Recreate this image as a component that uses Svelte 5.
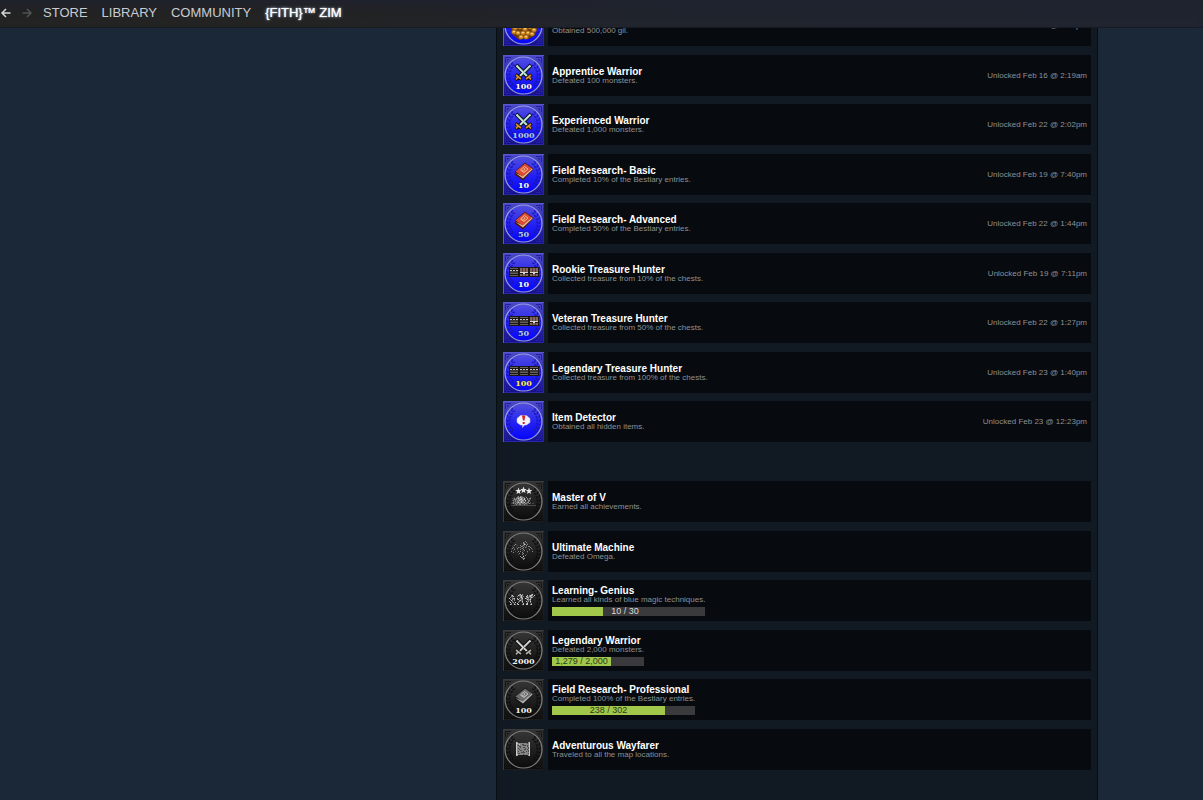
<script>
  const nav = ['STORE', 'LIBRARY', 'COMMUNITY'];

  const unlocked = [
    { icon: 'gil', title: '', text: 'Obtained 500,000 gil.', date: 'Unlocked Feb 22 @ 2:02pm' },
    { icon: 'swords', num: '100', tone: '#ffffff', title: 'Apprentice Warrior', text: 'Defeated 100 monsters.', date: 'Unlocked Feb 16 @ 2:19am' },
    { icon: 'swords', num: '1000', tone: '#b4cdf5', title: 'Experienced Warrior', text: 'Defeated 1,000 monsters.', date: 'Unlocked Feb 22 @ 2:02pm' },
    { icon: 'book', num: '10', tone: '#ffffff', title: 'Field Research- Basic', text: 'Completed 10% of the Bestiary entries.', date: 'Unlocked Feb 19 @ 7:40pm' },
    { icon: 'book', num: '50', tone: '#b4cdf5', title: 'Field Research- Advanced', text: 'Completed 50% of the Bestiary entries.', date: 'Unlocked Feb 22 @ 1:44pm' },
    { icon: 'chests', open: 1, num: '10', tone: '#ffffff', title: 'Rookie Treasure Hunter', text: 'Collected treasure from 10% of the chests.', date: 'Unlocked Feb 19 @ 7:11pm' },
    { icon: 'chests', open: 2, num: '50', tone: '#b4cdf5', title: 'Veteran Treasure Hunter', text: 'Collected treasure from 50% of the chests.', date: 'Unlocked Feb 22 @ 1:27pm' },
    { icon: 'chests', open: 3, num: '100', tone: '#ffee58', title: 'Legendary Treasure Hunter', text: 'Collected treasure from 100% of the chests.', date: 'Unlocked Feb 23 @ 1:40pm' },
    { icon: 'bubble', title: 'Item Detector', text: 'Obtained all hidden items.', date: 'Unlocked Feb 23 @ 12:23pm' }
  ];

  const locked = [
    { icon: 'stars', title: 'Master of V', text: 'Earned all achievements.' },
    { icon: 'omega', title: 'Ultimate Machine', text: 'Defeated Omega.' },
    { icon: 'party', title: 'Learning- Genius', text: 'Learned all kinds of blue magic techniques.', bar: { now: 10, max: 30, label: '10 / 30' } },
    { icon: 'swords', num: '2000', tone: '#f4f4f4', title: 'Legendary Warrior', text: 'Defeated 2,000 monsters.', bar: { now: 1279, max: 2000, label: '1,279 / 2,000' } },
    { icon: 'book', num: '100', tone: '#f4f4f4', title: 'Field Research- Professional', text: 'Completed 100% of the Bestiary entries.', bar: { now: 238, max: 302, label: '238 / 302' } },
    { icon: 'map', title: 'Adventurous Wayfarer', text: 'Traveled to all the map locations.' }
  ];

  // Pixel sprites: one character per pixel, "." is transparent.
  const sprites = {
    party: {
      x: 6, y: 14, rows: [
        '..........gw.g........gw.....',
        '..gw.....wggwg....w.gwwg.w...',
        '..ggw...g.dgwdg..wgdgwgdg....',
        '.g.d.......gwg...gwgdgwg.....',
        'w..ggw..w.gdgw..wgdg.gd......',
        '.g.gdg..gw.dgg...dwggw.......',
        '..wd.g....gwdg....dgdg.......',
        'g..g.....dg.dw...wdg.w.......',
        '.w.dg.w..g...g....g..g.......',
        '..g..g..w.....w..gw...g......',
        '.wg..wg.gw...gw..ww..gw......'
      ]
    },
    omega: {
      x: 8, y: 10, rows: [
        '..............g...........',
        '............gd.g..........',
        '..........d.gg..d.........',
        '....gd......dwg.g.........',
        '...g..d..g.dgd.g..........',
        '.d........gg.d.d.gg.......',
        '..g..d.gdg..g.gd...g......',
        '.g.d..g...dgd....d..g.....',
        'd..g..d..g..g..d..g..d....',
        '..d........d.g....d.......',
        'g...d..g.g..d...g....g....',
        '..g...d....g....d.........',
        '........g..dg.............',
        '.......d...g...d..........',
        '............d.g...........',
        '.........g..w.............',
        '..........gg.d............',
        '...........dgg............',
        '............g.............'
      ]
    },
    castle: {
      x: 8, y: 15, rows: [
        '......dg.ggd..d..........',
        '...d.dgggwgggd.g...d.....',
        '.ddgdggwggwgdwd.g.gg.....',
        '..dgggdggwwggwd.gddd.....',
        '.dgdgdggwggwgdwd.gg......',
        '..ddgdggdgwggdg.dgd......',
        '.dgddggwggwggwddgg.d.....',
        'ddgdgdgdggdggdggddgd.dd..',
        '...ddgddggdddgddd........',
        'ddddddddddddddddddddddddd'
      ]
    },
    map: {
      x: 13, y: 13, rows: [
        'wg..........gw',
        'wwgggggggggdgw',
        'wggwggddgggggw',
        'wgdggggdddgdgw',
        'wggddggggggdgw',
        'wgggdggddgggdw',
        'wgdggggggdggdw',
        'wggdggggddgdgw',
        'wgggddggggggdw',
        'wgdggggdggdgdw',
        'wggggddddggggw',
        'wgddggggggggdw',
        'wwgggggdgggggw',
        'wg..........gw'
      ]
    }
  };

  const tones = { w: '#c8c8c8', g: '#858585', d: '#4a4a4a' };

  const pixels = (s) =>
    s.rows.flatMap((row, j) =>
      [...row].flatMap((c, i) => (tones[c] ? [{ x: s.x + i, y: s.y + j, fill: tones[c] }] : []))
    );

  // Laurel leaves, spread along both sides of the medal.
  const leaves = [-46, -32, -18, -4, 10, 24, 38].flatMap((a) =>
    [1, -1].flatMap((side) =>
      [14, 16.5].map((radius, k) => {
        const r = (a * Math.PI) / 180;
        return {
          x: 20.5 + side * radius * Math.cos(r),
          y: 20.5 + radius * Math.sin(r),
          turn: side * (a + (k ? 30 : -30))
        };
      })
    )
  );
</script>

{#snippet dots(sprite)}
  {#each pixels(sprite) as p}
    <rect x={p.x} y={p.y} width="1" height="1" fill={p.fill} shape-rendering="crispEdges" />
  {/each}
{/snippet}

{#snippet medal(item, on)}
  <svg class="medal" viewBox="0 0 41 41" aria-hidden="true">
    <rect width="41" height="41" fill={on ? 'url(#plateOn)' : 'url(#plateOff)'} />
    <path d="M.5 41V.5H41" fill="none" stroke={on ? '#5856d0' : '#3a3a3a'} />
    <path d="M40.500 1v39.500H1" fill="none" stroke={on ? '#2b27a4' : '#1c1c1c'} />
    <g fill="none" stroke={on ? '#27209e' : '#161616'}>
      <path d="M2.5 8V2.5H8M4.5 6V4.5H6M33 2.5h5.500V8M35 4.500h1.500V6M2.500 33v5.500H8M4.500 35v1.500H6M33 38.500h5.500V33M35 36.500h1.500V35" />
    </g>
    <circle cx="20.5" cy="20.5" r="18.5" fill={on ? 'url(#discOn)' : 'url(#discOff)'} stroke={on ? '#9a9fdc' : '#808080'} stroke-width="1.2" />
    {#each leaves as l}
      <ellipse cx={l.x} cy={l.y} rx="0.7" ry="1.6" fill={on ? '#1815b4' : '#0c0c0c'} transform="rotate({l.turn} {l.x} {l.y})" />
    {/each}

    {#if item.icon === 'swords'}
      <g fill="none">
        <path d="M28 10L15 23M13 10l13 13" stroke="#0a0a0a" stroke-width="4" />
        <path d="M27.500 10.500L17 21M13.500 10.500L24 21" stroke={on ? '#cfe4e0' : '#d4d4d4'} stroke-width="2.200" />
        <path d="M27 12L18 21M15 11l9 9" stroke={on ? '#69b3a8' : '#777'} stroke-width="0.800" />
        <path d="M12.500 19.500l6 5M28.500 19.500l-6 5M16 21l-3.500 4M25 21l3.500 4" stroke="#100a04" stroke-width="3.400" />
        <path d="M13 20l5 4M28 20l-5 4M15.500 21.500l-2.500 3M25.500 21.500l2.500 3" stroke={on ? '#d9902a' : '#aaa'} stroke-width="1.700" />
      </g>
    {:else if item.icon === 'book'}
      <path d="M22 8.500L30.500 15 20 26.500 11.500 20.500 12.500 17z" fill={on ? '#4a1612' : '#161616'} />
      <path d="M12.500 19L20 24.500 29.500 15.500 29 14 19.500 22z" fill={on ? '#dcb98c' : '#b4b4b4'} />
      <path d="M22 9.500L29 14.500 19.500 22.500 12.500 17.500z" fill={on ? '#dd4a35' : '#6c6c6c'} />
      <path d="M17.500 16l4-3.500 3.500 2.500-4 3.500zM19 16l2.500 1.500M21 14l1 2.500" fill="none" stroke={on ? '#f0b988' : '#c0c0c0'} />
    {:else if item.icon === 'chests'}
      {#each [0, 1, 2] as n}
        <g transform="translate({6 + n * 10} 14)" shape-rendering="crispEdges">
          <rect width="10" height="10" fill="#1c1716" />
          {#if n < item.open}
            <path d="M1 1h8v1H1zM1 6h8v1H1zM1 8h8v1H1z" fill="#65605c" />
            <path d="M1 3h2v1H1zM4 3h2v1H4zM7 3h2v1H7z" fill="#c8c8c2" />
            <path d="M1 4h8v2H1z" fill="#3d3937" />
          {:else}
            <path d="M1 1h8v4H1zM1 7h8v2H1z" fill="#84665c" />
            <path d="M3 1h1v4H3zM6 1h1v4H6zM3 7h1v2H3zM6 7h1v2H6z" fill="#54403a" />
            <path d="M1 5h8v1H1zM4 6h2v1H4z" fill="#d8d4d0" />
          {/if}
        </g>
      {/each}
    {:else if item.icon === 'bubble'}
      <path d="M17.500 14.500h6l3.500 3v4l-3.500 2.500h-2l-2 2.500v-2.500h-2L14 21.500v-4z" fill="#f6f4fb" stroke="#c9c8ee" stroke-width="0.500" />
      <path d="M19 14.500h3.400l-.9 5h-1.600zM19.700 21h2v2h-2z" fill="#e0202c" />
    {:else if item.icon === 'gil'}
      <path d="M8 21l5-5 9-3 8 5 4 5-2 7-6 4-6-1-4 2-6-5z" fill="#6b3c08" />
      {#each [[12, 23], [17, 22], [22, 24], [27, 22], [31, 25], [11, 27], [15, 28], [20, 28], [25, 28], [29, 29], [18, 32], [23, 32]] as [x, y]}
        <ellipse cx={x} cy={y} rx="2.600" ry="2.200" fill="#d8942c" stroke="#7a4810" stroke-width="0.600" />
        <rect x={x - 1} y={y - 1} width="2" height="1" fill="#f4cf74" />
      {/each}
    {:else if item.icon === 'stars'}
      {#each [[15.5, 10], [20.5, 9], [26, 10]] as [x, y]}
        <path transform="translate({x} {y})" d="M0-3.400L.9-1h2.400L1.400.600 2 3 0 1.700-2 3-1.400.600-3.300-1H-.9z" fill="#e9e9e9" />
      {/each}
      {@render dots(sprites.castle)}
    {:else}
      {@render dots(sprites[item.icon])}
    {/if}

    {#if item.num}
      <text class="num" x="20.500" y="34" text-anchor="middle" fill={item.tone} stroke={on ? '#14149a' : '#0c0c0c'}>{item.num}</text>
    {/if}
  </svg>
{/snippet}

{#snippet entry(item, on)}
  <li>
    {@render medal(item, on)}
    <div class="card">
      <div class="info">
        {#if item.title}<h3>{item.title}</h3>{:else}<div class="blank"></div>{/if}
        <p>{item.text}</p>
        {#if item.bar}
          {@const share = item.bar.now / item.bar.max}
          <div class="bar" role="progressbar" aria-valuenow={item.bar.now} aria-valuemin="0" aria-valuemax={item.bar.max} aria-label={item.title}>
            <div class="fill" style="width: {share * 100}%">
              {#if share >= 0.5}{item.bar.label}{/if}
            </div>
            {#if share < 0.5}<span class="rest">{item.bar.label}</span>{/if}
          </div>
        {/if}
      </div>
      {#if item.date}<time>{item.date}</time>{/if}
    </div>
  </li>
{/snippet}

<svg class="defs" width="0" height="0" aria-hidden="true">
  <defs>
    <linearGradient id="plateOn" x2="0" y2="1"><stop stop-color="#4b49c8" /><stop offset="1" stop-color="#140f8c" /></linearGradient>
    <linearGradient id="discOn" x2="0" y2="1"><stop stop-color="#5350dc" /><stop offset="0.550" stop-color="#2220f4" /><stop offset="1" stop-color="#0504fb" /></linearGradient>
    <linearGradient id="plateOff" x2="0" y2="1"><stop stop-color="#343434" /><stop offset="1" stop-color="#0c0c0c" /></linearGradient>
    <linearGradient id="discOff" x2="0" y2="1"><stop stop-color="#363636" /><stop offset="1" stop-color="#0b0b0b" /></linearGradient>
  </defs>
</svg>

<header>
  <button aria-label="Back">
    <svg viewBox="0 0 10 10"><path d="M9.500 5H1.200M5 1L1 5l4 4" /></svg>
  </button>
  <button aria-label="Forward" disabled>
    <svg viewBox="0 0 10 10"><path d="M.5 5h8.300M5 1l4 4-4 4" /></svg>
  </button>
  <nav>
    {#each nav as label}<a href="#top">{label}</a>{/each}
    <a class="current" href="#top" aria-current="page">{'{FITH}™ ZIM'}</a>
  </nav>
</header>

<div class="page">
  <main>
    <ul>{#each unlocked as item}{@render entry(item, true)}{/each}</ul>
    <ul>{#each locked as item}{@render entry(item, false)}{/each}</ul>
  </main>
</div>

<style>
  :global(body) {
    background: #1b2838;
    font-family: 'Liberation Sans', Arial, sans-serif;
    overflow: hidden;
  }
  .defs { position: absolute; }
  header {
    position: fixed;
    inset: 0 0 auto;
    z-index: 1;
    display: flex;
    align-items: center;
    box-sizing: border-box;
    height: 28px;
    border-bottom: 1px solid #171b21;
    background: linear-gradient(90deg, #232323 0, #232323 25%, #20242d 55%, #1f2430);
    box-shadow: inset 0 12px 12px -8px #1f2330;
    padding-bottom: 1px;
  }
  button {
    width: 12px;
    height: 12px;
    padding: 0;
    border: 0;
    background: none;
    color: #d3d5d8;
    display: flex;
    align-items: center;
    margin-right: 9px;
  }
  button:disabled { color: #505254; }
  button svg {
    width: 12px;
    height: 10px;
    fill: none;
    stroke: currentColor;
    stroke-width: 1.500;
  }
  nav {
    display: flex;
    gap: 14px;
    padding-left: 1px;
  }
  a {
    color: #c8ccd2;
    font-size: 13px;
    line-height: 16px;
    text-decoration: none;
  }
  .current {
    color: #ffffff;
    text-shadow: 0 0 3px #b9cbe4, 0 0 1px #ffffff;
  }
  .page {
    display: grid;
    grid-template-columns: 496fr 602fr 105fr;
    min-height: 100vh;
  }
  main {
    grid-column: 2;
    min-width: 0;
    box-sizing: border-box;
    padding: 5px 6px 24px;
    border: solid #080d12;
    border-width: 0 1px;
    background: #111a23;
  }
  ul {
    list-style: none;
    margin: 0;
    padding: 0;
  }
  ul + ul { margin-top: 39px; }
  li {
    display: flex;
    gap: 4px;
    margin-bottom: 9px;
  }
  li:nth-child(even) { margin-bottom: 8px; }
  li:last-child { margin-bottom: 0; }
  .medal {
    flex: none;
    width: 41px;
    height: 41px;
  }
  .num {
    font: bold 8px 'DejaVu Serif', serif;
    stroke-width: 1px;
    paint-order: stroke;
  }
  .card {
    flex: 1;
    display: flex;
    align-items: center;
    justify-content: space-between;
    min-width: 0;
    padding: 0 4px;
    background: #070a0f;
  }
  .info { width: fit-content; }
  h3, p { margin: 0; }
  h3, .blank {
    height: 10px;
    color: #ffffff;
    font-size: 10px;
    line-height: 12px;
  }
  p, time {
    color: #8d9194;
    font-size: 8px;
    line-height: 10px;
    white-space: nowrap;
  }
  .bar {
    display: flex;
    height: 9px;
    margin-top: 2px;
    background: #3a3a3c;
    font-size: 9px;
    line-height: 9px;
    white-space: nowrap;
  }
  .fill {
    background: #a1c84b;
    color: #2b3a1c;
    text-align: center;
  }
  .rest {
    padding-left: 8px;
    color: #dcdcdc;
  }
</style>
